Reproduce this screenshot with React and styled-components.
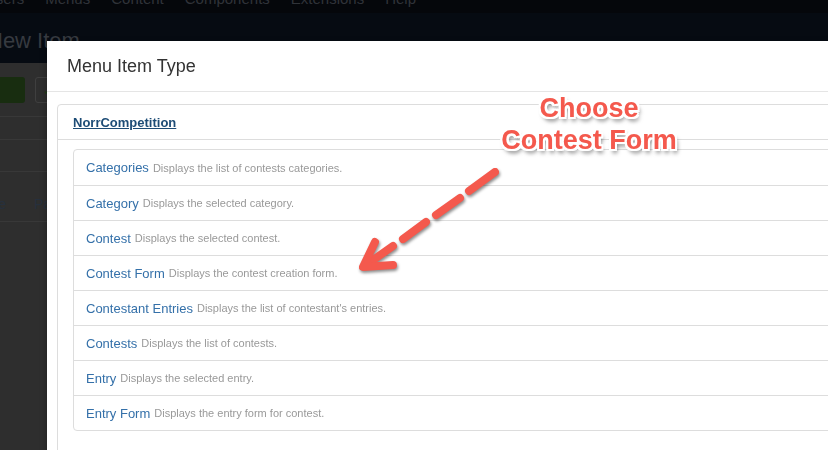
import React from 'react';
import styled, { createGlobalStyle } from 'styled-components';

const GlobalStyle = createGlobalStyle`
  html, body {
    margin: 0;
    padding: 0;
    background-color: #2e2e2e;
    font-family: 'Liberation Sans', Arial, sans-serif;
    overflow: hidden;
  }
  * { box-sizing: border-box; }
`;

/* ---- dimmed admin page behind the modal ---- */

const Page = styled.div`
  width: 828px;
  height: 450px;
  display: flex;
  flex-direction: column;
  background-color: #2e2e2e;
`;

const TopNav = styled.div`
  height: 13px;
  background-color: #05070b;
  display: flex;
  gap: 21px;
  overflow: hidden;
`;

const NavItem = styled.span`
  font-size: 15px;
  line-height: 16px;
  margin-top: -9px;
  margin-left: ${props => props.first ? '-15px' : '0'};
  color: #303339;
  white-space: nowrap;
`;

const Header = styled.div`
  height: 50px;
  background-color: #060b12;
  padding-top: 16px;
  overflow: hidden;
`;

const PageTitle = styled.h1`
  margin: 0 0 0 -13px;
  font-size: 22px;
  font-weight: normal;
  line-height: 24px;
  color: #363a40;
`;

const Toolbar = styled.div`
  height: 54px;
  display: flex;
  align-items: center;
  gap: 10px;
  border-bottom: 1px solid #383838;
`;

const SaveButton = styled.div`
  width: 25px;
  height: 26px;
  background-color: #182d10;
  border-radius: 0 3px 3px 0;
`;

const ToolButton = styled.div`
  width: 60px;
  height: 26px;
  border: 1px solid #3f3f3f;
  border-radius: 3px;
  padding: 6px 7px;
  color: #1f3a17;
  font-size: 12px;
`;

const Row = styled.div`
  height: ${props => props.h}px;
  border-bottom: 1px solid #383838;
  display: flex;
  align-items: center;
`;

const TabText = styled.span`
  font-size: 14px;
  color: #26303d;
  margin-left: ${props => props.ml}px;
  padding-top: 14px;
  white-space: nowrap;
`;

/* ---- modal ---- */

const Modal = styled.div`
  position: fixed;
  left: 47px;
  top: 41px;
  width: 900px;
  height: 500px;
  background-color: #ffffff;
  box-shadow: 0 3px 7px rgba(0, 0, 0, 0.3);
  display: flex;
  flex-direction: column;
`;

const ModalHeader = styled.div`
  height: 51px;
  border-bottom: 1px solid #e5e5e5;
  display: flex;
  align-items: center;
  padding-left: 20px;
`;

const ModalTitle = styled.h3`
  margin: 0;
  font-size: 18px;
  font-weight: normal;
  color: #333333;
  line-height: 24px;
`;

const ModalBody = styled.div`
  padding: 12px 10px 0 10px;
`;

const Panel = styled.div`
  border: 1px solid #dddddd;
  border-radius: 4px;
  height: 400px;
`;

const PanelHeading = styled.div`
  height: 35px;
  border-bottom: 1px solid #dddddd;
  display: flex;
  align-items: center;
  padding-left: 15px;
`;

const PanelLink = styled.a`
  font-size: 13px;
  font-weight: bold;
  color: #1d4c76;
  text-decoration: underline;
`;

const PanelBody = styled.div`
  padding: 9px 0 0 15px;
`;

const ListGroup = styled.ul`
  list-style: none;
  margin: 0;
  padding: 0;
  border: 1px solid #dddddd;
  border-radius: 4px;
`;

const ListItem = styled.li`
  height: 35px;
  display: flex;
  align-items: center;
  padding-left: 12px;
  border-top: ${props => props.first ? 'none' : '1px solid #dddddd'};
`;

const ItemTitle = styled.a`
  font-size: 13px;
  color: #3470a9;
  margin-right: 4px;
`;

const ItemDesc = styled.small`
  font-size: 11px;
  color: #999999;
`;

/* ---- red annotation over the screenshot ---- */

const Callout = styled.div`
  position: fixed;
  left: 469px;
  top: 92px;
  width: 240px;
  text-align: center;
  font-size: 27px;
  font-weight: bold;
  line-height: 32px;
  color: #f4594d;
  text-shadow:
    -2px -2px 0 #fff, 2px -2px 0 #fff, -2px 2px 0 #fff, 2px 2px 0 #fff,
    0 -2px 0 #fff, 0 2px 0 #fff, -2px 0 0 #fff, 2px 0 0 #fff,
    2px 4px 4px rgba(0, 0, 0, 0.55);
`;

const Arrow = styled.svg`
  position: fixed;
  left: 340px;
  top: 150px;
  width: 180px;
  height: 140px;
  overflow: visible;
  filter: drop-shadow(1px 2px 1.5px rgba(0, 0, 0, 0.45));
`;

const items = [
  ['Categories', 'Displays the list of contests categories.'],
  ['Category', 'Displays the selected category.'],
  ['Contest', 'Displays the selected contest.'],
  ['Contest Form', 'Displays the contest creation form.'],
  ['Contestant Entries', "Displays the list of contestant's entries."],
  ['Contests', 'Displays the list of contests.'],
  ['Entry', 'Displays the selected entry.'],
  ['Entry Form', 'Displays the entry form for contest.'],
];

const navItems = ['Users', 'Menus', 'Content', 'Components', 'Extensions', 'Help'];

const App = () => {
  // arrow segments in page coordinates, shifted into the svg box
  const seg = (x1, y1, x2, y2) => ({ x1: x1 - 340, y1: y1 - 150, x2: x2 - 340, y2: y2 - 150 });
  const dashes = [
    seg(495, 172, 469, 191),
    seg(460, 198, 436, 215),
    seg(426, 222, 403, 239),
    seg(393, 246, 366, 265),
  ];

  return (
    <>
      <GlobalStyle />
      <Page>
        <TopNav>
          {navItems.map((n, i) => (
            <NavItem key={n} first={i === 0}>{n}</NavItem>
          ))}
        </TopNav>
        <Header>
          <PageTitle>New Item</PageTitle>
        </Header>
        <Toolbar>
          <SaveButton />
          <ToolButton>✓</ToolButton>
        </Toolbar>
        <Row h={23} />
        <Row h={32} />
        <Row h={50}>
          <TabText ml={-20}>Title</TabText>
          <TabText ml={28}>Parent</TabText>
        </Row>
      </Page>

      <Modal>
        <ModalHeader>
          <ModalTitle>Menu Item Type</ModalTitle>
        </ModalHeader>
        <ModalBody>
          <Panel>
            <PanelHeading>
              <PanelLink>NorrCompetition</PanelLink>
            </PanelHeading>
            <PanelBody>
              <ListGroup>
                {items.map(([title, desc], i) => (
                  <ListItem key={title} first={i === 0}>
                    <ItemTitle>{title}</ItemTitle>
                    <ItemDesc>{desc}</ItemDesc>
                  </ListItem>
                ))}
              </ListGroup>
            </PanelBody>
          </Panel>
        </ModalBody>
      </Modal>

      <Callout>
        Choose<br />Contest Form
      </Callout>

      <Arrow viewBox="0 0 180 140">
        <g stroke="#f4594d" strokeWidth="8" strokeLinecap="round" strokeLinejoin="round" fill="none">
          {dashes.map((d, i) => (
            <line key={i} {...d} />
          ))}
          <polyline points={`${375 - 340},${242 - 150} ${363 - 340},${267 - 150} ${393 - 340},${265 - 150}`} />
        </g>
      </Arrow>
    </>
  );
};

export default App;
